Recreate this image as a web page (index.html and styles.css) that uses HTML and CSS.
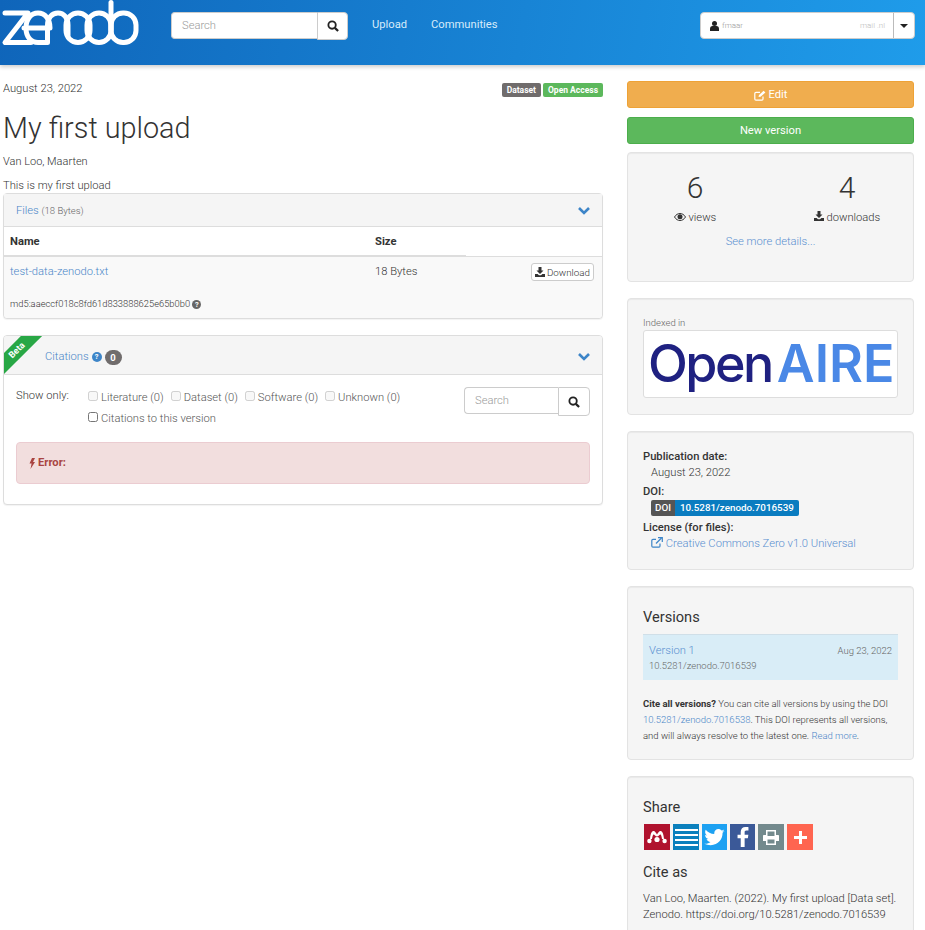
FILE: index.html
```html
<!DOCTYPE html>
<html>
    <head>
        <meta charset="utf-8">
        <title>My first upload</title>
        <link rel="stylesheet" href="styles.css">
    </head>
    <body>
        <header class="navbar">
            <svg class="logo" width="140" height="46" viewBox="0 0 140 46" fill="none" stroke="#fff" stroke-width="5" stroke-linecap="round" stroke-linejoin="round">
                <polyline points="5,13 28,13 5,42.5 31,42.5"/>
                <path d="M24 28 H50 C50 19 45 13 38 13 C31 13 26 19 26 28 C26 37 31 42.5 38 42.5 H46"/>
                <path d="M47.5 42.5 V25 C47.5 18 52 13 58 13 C64 13 68 18 68 25 V35"/>
                <rect x="66" y="13" width="24" height="29.5" rx="12"/>
                <rect x="87" y="13" width="24" height="29.5" rx="12"/>
                <line x1="111" y1="2.5" x2="111" y2="30"/>
                <rect x="111" y="13" width="25" height="29.5" rx="12"/>
            </svg>
            <div class="search-group nav-search">
                <input class="search-input" type="text" placeholder="Search">
                <button class="search-btn">
                    <svg width="12" height="12" viewBox="0 0 13 13" fill="none" stroke="#222" stroke-width="2"><circle cx="5.5" cy="5.5" r="4"/><line x1="8.5" y1="8.5" x2="12" y2="12" stroke-width="2.4"/></svg>
                </button>
            </div>
            <a class="nav-link" href="#">Upload</a>
            <a class="nav-link" href="#">Communities</a>
            <div class="user-menu">
                <div class="user-name">
                    <svg width="9" height="10" viewBox="0 0 9 10" fill="#222"><circle cx="4.5" cy="2.6" r="2.5"/><path d="M0 10 V7.5 C0 5.8 1.5 5 2.5 5 H6.5 C7.5 5 9 5.8 9 7.5 V10 Z"/></svg>
                    <span class="user-blur">fmaar</span>
                    <span class="user-blur user-blur-end">mail .nl</span>
                </div>
                <div class="user-caret"></div>
            </div>
        </header>

        <div class="page">
            <main class="left-col">
                <div class="meta-row">
                    <span class="pub-date">August 23, 2022</span>
                    <span class="labels">
                        <span class="label label-grey">Dataset</span>
                        <span class="label label-green">Open Access</span>
                    </span>
                </div>
                <h1 class="title">My first upload</h1>
                <p class="authors">Van Loo, Maarten</p>
                <p class="description">This is my first upload</p>

                <section class="panel">
                    <div class="panel-head files-head">
                        <span><a href="#">Files</a> <small>(18 Bytes)</small></span>
                        <svg class="chevron" width="12" height="8" viewBox="0 0 12 8" fill="none" stroke="#3d85c8" stroke-width="2.6"><polyline points="1,1 6,6 11,1"/></svg>
                    </div>
                    <div class="files-cols">
                        <b class="col-name">Name</b>
                        <b class="col-size">Size</b>
                    </div>
                    <div class="files-row">
                        <div class="file-row-top">
                            <a class="col-name" href="#">test-data-zenodo.txt</a>
                            <span class="col-size">18 Bytes</span>
                            <button class="download-btn">
                                <svg width="10" height="10" viewBox="0 0 10 10" fill="#333"><path d="M3.5 0 H6.5 V3.5 H8.5 L5 7 L1.5 3.5 H3.5 Z"/><path d="M0 7 H2.6 L4 8.3 H6 L7.4 7 H10 V10 H0 Z"/></svg>
                                Download
                            </button>
                        </div>
                        <div class="md5">md5:aaeccf018c8fd61d833888625e65b0b0
                            <span class="help help-grey">?</span>
                        </div>
                    </div>
                </section>

                <section class="panel citations-panel">
                    <div class="ribbon">Beta</div>
                    <div class="panel-head citations-head">
                        <span class="citations-title">
                            <a href="#">Citations</a>
                            <span class="help help-blue">?</span>
                            <span class="badge">0</span>
                        </span>
                        <svg class="chevron" width="12" height="8" viewBox="0 0 12 8" fill="none" stroke="#3d85c8" stroke-width="2.6"><polyline points="1,1 6,6 11,1"/></svg>
                    </div>
                    <div class="citations-body">
                        <div class="filters">
                            <span class="show-only">Show only:</span>
                            <div class="filter-lines">
                                <div class="filter-line">
                                    <label><input type="checkbox" disabled> Literature (0)</label>
                                    <label><input type="checkbox" disabled> Dataset (0)</label>
                                    <label><input type="checkbox" disabled> Software (0)</label>
                                    <label><input type="checkbox" disabled> Unknown (0)</label>
                                </div>
                                <div class="filter-line">
                                    <label><input type="checkbox"> Citations to this version</label>
                                </div>
                            </div>
                            <div class="search-group cite-search">
                                <input class="search-input" type="text" placeholder="Search">
                                <button class="search-btn">
                                    <svg width="12" height="12" viewBox="0 0 13 13" fill="none" stroke="#222" stroke-width="2"><circle cx="5.5" cy="5.5" r="4"/><line x1="8.5" y1="8.5" x2="12" y2="12" stroke-width="2.4"/></svg>
                                </button>
                            </div>
                        </div>
                        <div class="alert-error">
                            <svg width="6" height="11" viewBox="0 0 6 11" fill="#a94442"><path d="M3 0 H6 L4 4 H6 L1.5 11 L2.6 5.5 H0.5 Z"/></svg>
                            <b>Error:</b>
                        </div>
                    </div>
                </section>
            </main>

            <aside class="right-col">
                <a class="btn btn-edit" href="#">
                    <svg width="12" height="11" viewBox="0 0 12 11" fill="none" stroke="#fff" stroke-width="1.2"><path d="M9 6.5 V9 C9 9.7 8.6 10.2 8 10.2 H2 C1.3 10.2 0.8 9.7 0.8 9 V3.5 C0.8 2.8 1.3 2.3 2 2.3 H6"/><path d="M4.5 7 L5 5 L9.6 0.8 L11.4 2.4 L6.5 6.8 Z" fill="#fff" stroke="none"/></svg>
                    Edit
                </a>
                <a class="btn btn-version" href="#">New version</a>

                <div class="well stats-well">
                    <div class="stats">
                        <div class="stat">
                            <div class="stat-num">6</div>
                            <div class="stat-label">
                                <svg width="12" height="8" viewBox="0 0 12 8"><path d="M0.5 4 C2 1.5 4 0.5 6 0.5 C8 0.5 10 1.5 11.5 4 C10 6.5 8 7.5 6 7.5 C4 7.5 2 6.5 0.5 4 Z" fill="none" stroke="#333" stroke-width="1"/><circle cx="6" cy="3.8" r="2.5" fill="#333"/></svg>
                                views
                            </div>
                        </div>
                        <div class="stat">
                            <div class="stat-num">4</div>
                            <div class="stat-label">
                                <svg width="10" height="10" viewBox="0 0 10 10" fill="#333"><path d="M3.5 0 H6.5 V3.5 H8.5 L5 7 L1.5 3.5 H3.5 Z"/><path d="M0 7 H2.6 L4 8.3 H6 L7.4 7 H10 V10 H0 Z"/></svg>
                                downloads
                            </div>
                        </div>
                    </div>
                    <a class="more-details" href="#">See more details...</a>
                </div>

                <div class="well index-well">
                    <div class="indexed">Indexed in</div>
                    <div class="openaire"><span class="oa-open">Open</span><span class="oa-aire">AIRE</span></div>
                </div>

                <div class="well info-well">
                    <dl class="info">
                        <dt>Publication date:</dt>
                        <dd>August 23, 2022</dd>
                        <dt>DOI:</dt>
                        <dd class="doi-value"><span class="doi-badge"><span class="doi-left">DOI</span><span class="doi-right">10.5281/zenodo.7016539</span></span></dd>
                        <dt>License (for files):</dt>
                        <dd>
                            <a href="#">
                                <svg width="12" height="11" viewBox="0 0 12 11" fill="none" stroke="#3d85c8" stroke-width="1.2"><path d="M9 6.5 V9 C9 9.7 8.6 10.2 8 10.2 H2 C1.3 10.2 0.8 9.7 0.8 9 V3.5 C0.8 2.8 1.3 2.3 2 2.3 H5"/><path d="M5 6.5 L10.5 1"/><path d="M7 0.7 H11.3 V5"/></svg>
                                Creative Commons Zero v1.0 Universal
                            </a>
                        </dd>
                    </dl>
                </div>

                <div class="well versions-well">
                    <h4 class="well-title">Versions</h4>
                    <div class="version-row">
                        <div class="version-top">
                            <a class="version-name" href="#">Version 1</a>
                            <span class="version-date">Aug 23, 2022</span>
                        </div>
                        <div class="version-doi">10.5281/zenodo.7016539</div>
                    </div>
                    <p class="cite-all"><b>Cite all versions?</b> You can cite all versions by using the DOI <a href="#">10.5281/zenodo.7016538</a>. This DOI represents all versions, and will always resolve to the latest one. <a href="#">Read more</a>.</p>
                </div>

                <div class="well share-well">
                    <h4 class="well-title">Share</h4>
                    <div class="share-icons">
                        <span class="share share-mendeley">
                            <svg width="20" height="14" viewBox="0 0 20 14" fill="#fff"><circle cx="2.4" cy="11" r="2.2"/><circle cx="17.6" cy="11" r="2.2"/><circle cx="10" cy="9.5" r="2.6"/><path d="M3 9 C3.5 3 5 1 6.5 1 C8 1 9 3 10 4.5 C11 3 12 1 13.5 1 C15 1 16.5 3 17 9 L15 9 C14.5 6 14 4.5 13.5 4.5 C12.5 4.5 11.5 6.5 10 6.5 C8.5 6.5 7.5 4.5 6.5 4.5 C6 4.5 5.5 6 5 9 Z"/></svg>
                        </span>
                        <span class="share share-lines">
                            <svg width="23" height="17" viewBox="0 0 23 17" fill="#fff"><rect width="23" height="2"/><rect y="5" width="23" height="2"/><rect y="10" width="23" height="2"/><rect y="15" width="23" height="2"/></svg>
                        </span>
                        <span class="share share-twitter">
                            <svg width="21" height="17" viewBox="0 0 24 20" fill="#fff"><path d="M24 2.4c-.9.4-1.8.7-2.8.8 1-.6 1.8-1.6 2.2-2.7-1 .6-2 1-3.1 1.2C19.3 .7 18 0 16.6 0c-2.7 0-4.9 2.2-4.9 4.9 0 .4 0 .8.1 1.1C7.7 5.8 4.1 3.9 1.7 .9c-.4.7-.7 1.6-.7 2.5 0 1.7.9 3.2 2.2 4.1-.8 0-1.6-.2-2.2-.6v.1c0 2.4 1.7 4.4 3.9 4.8-.4.1-.8.2-1.3.2-.3 0-.6 0-.9-.1.6 2 2.4 3.4 4.6 3.4-1.7 1.3-3.8 2.1-6.1 2.1-.4 0-.8 0-1.2-.1C2.2 18.3 4.8 19 7.5 19c9.1 0 14-7.5 14-14v-.6c1-.7 1.8-1.6 2.5-2z"/></svg>
                        </span>
                        <span class="share share-facebook">
                            <svg width="12" height="20" viewBox="0 0 13 22" fill="#fff"><path d="M4 22 V12.5 H0.5 V8.5 H4 V5.5 C4 2 6 0 9.3 0 C10.8 0 12 .1 12.5 .2 V3.8 H10.3 C8.6 3.8 8.3 4.6 8.3 5.8 V8.5 H12.4 L11.8 12.5 H8.3 V22 Z"/></svg>
                        </span>
                        <span class="share share-print">
                            <svg width="16" height="15" viewBox="0 0 16 15" fill="#fff"><path fill-rule="evenodd" d="M3 0 H13 V5 H15 C15.6 5 16 5.4 16 6 V11 H13 V15 H3 V11 H0 V6 C0 5.4 .4 5 1 5 H3 Z M4.5 1.5 V6 H11.5 V1.5 Z M4.5 9.5 V13.5 H11.5 V9.5 Z"/></svg>
                        </span>
                        <span class="share share-plus">
                            <svg width="13" height="13" viewBox="0 0 13 13" fill="#fff"><rect x="5" width="3" height="13"/><rect y="5" width="13" height="3"/></svg>
                        </span>
                    </div>
                    <h4 class="well-title cite-title">Cite as</h4>
                    <p class="citation">Van Loo, Maarten. (2022). My first upload [Data set]. Zenodo. https://doi.org/10.5281/zenodo.7016539</p>
                    <div class="style-select"></div>
                </div>
            </aside>
        </div>
    </body>
</html>
```

FILE: styles.css
```css
* {
    box-sizing: border-box;
}

html, body {
    margin: 0;
    padding: 0;
}

body {
    height: 930px;
    overflow: hidden;
    font-family: Roboto, sans-serif;
    font-size: 11.2px;
    font-weight: 300;
    line-height: 16px;
    color: #333;
    background-color: #fff;
}

a {
    color: #337ab7;
    text-decoration: none;
}

b {
    font-weight: 700;
}

/* top bar */
.navbar {
    display: flex;
    align-items: flex-start;
    height: 65px;
    background: linear-gradient(100deg, #0f65ba 0%, #1f9cea 100%);
    box-shadow: 0 2px 4px rgba(0, 0, 0, 0.2);
}

.logo {
    flex: none;
    margin-right: 31px;
}

.search-group {
    display: flex;
}

.search-input {
    font-family: Roboto, sans-serif;
    font-size: 11.2px;
    font-weight: 300;
    padding: 0 10px;
    border: 1px solid #ccc;
    border-right: none;
    border-radius: 4px 0 0 4px;
    background-color: #fff;
    outline: none;
    min-width: 0;
}

.search-input::placeholder {
    color: #999;
}

.search-btn {
    display: flex;
    align-items: center;
    justify-content: center;
    padding: 0;
    background-color: #fff;
    border: 1px solid #ccc;
    border-radius: 0 4px 4px 0;
}

.nav-search {
    margin-top: 12px;
}

.nav-search .search-input {
    width: 146px;
    height: 27px;
}

.nav-search .search-btn {
    width: 31px;
    height: 28px;
}

.nav-link {
    margin-top: 17px;
    margin-left: 24px;
    color: #d6ebfa;
    font-weight: 400;
}

.user-menu {
    display: flex;
    margin-top: 12px;
    margin-left: auto;
    margin-right: 10px;
    width: 215px;
    height: 27px;
    background-color: #fff;
    border: 1px solid #ccc;
    border-radius: 4px;
}

.user-name {
    flex: 1;
    display: flex;
    align-items: center;
    gap: 3px;
    padding-left: 9px;
    padding-right: 8px;
    border-right: 1px solid #bbb;
}

.user-blur {
    font-size: 8px;
    color: #999;
}

.user-blur-end {
    margin-left: auto;
    color: #bbb;
}

.user-caret {
    position: relative;
    width: 20px;
}

.user-caret::after {
    content: "";
    position: absolute;
    left: 6px;
    top: 11px;
    border-top: 4px solid #222;
    border-left: 4px solid transparent;
    border-right: 4px solid transparent;
}

/* page columns */
.page {
    display: flex;
    padding-left: 3px;
}

.left-col {
    flex: none;
    width: 600px;
    padding-top: 16px;
}

.right-col {
    flex: none;
    width: 287px;
    margin-left: 24px;
    padding-top: 16px;
}

.meta-row {
    display: flex;
    justify-content: space-between;
    height: 17px;
}

.labels {
    display: flex;
    gap: 2px;
    margin-top: 2px;
}

.label {
    height: 14px;
    padding: 0 5px;
    border-radius: 2px;
    color: #fff;
    font-size: 8.5px;
    font-weight: 700;
    line-height: 14px;
}

.label-grey {
    background-color: #706c6c;
}

.label-green {
    background-color: #5cb85c;
}

.title {
    margin: 13px 0 0;
    font-size: 28.8px;
    font-weight: 300;
    line-height: 34px;
}

.authors {
    margin: 9px 0 0;
    font-size: 11px;
}

.description {
    height: 15px;
    margin: 8px 0 0;
}

/* panels */
.panel {
    border: 1px solid #ddd;
    border-radius: 4px;
    box-shadow: 0 1px 1px rgba(0, 0, 0, 0.05);
    background-color: #fff;
}

.panel-head {
    display: flex;
    justify-content: space-between;
    align-items: center;
    background-color: #f5f5f5;
    border-bottom: 1px solid #ddd;
}

.panel-head a {
    color: #4a86c8;
}

.panel-head small {
    font-size: 9.5px;
    color: #666;
}

.chevron {
    flex: none;
    margin-right: 12px;
}

.files-head {
    height: 33px;
    padding-top: 2px;
    padding-left: 12px;
}

.files-cols {
    position: relative;
    display: flex;
    align-items: center;
    height: 30px;
    border-bottom: 1px solid #ddd;
}

.files-cols::after {
    content: "";
    position: absolute;
    left: 0;
    bottom: -1px;
    width: 462px;
    height: 2px;
    background-color: #ddd;
}

.files-cols b {
    color: #333;
}

.col-name {
    display: block;
    flex: none;
    width: 371px;
    padding-left: 6px;
}

.col-size {
    flex: none;
}

.files-row {
    height: 61px;
    background-color: #f9f9f9;
    border-radius: 0 0 4px 4px;
}

.file-row-top {
    display: flex;
    align-items: center;
    height: 30px;
    padding-right: 8px;
}

.file-row-top .col-name {
    color: #4a86c8;
}

.download-btn {
    display: flex;
    align-items: center;
    gap: 2px;
    height: 18px;
    margin-left: auto;
    padding: 0 3px;
    font-family: Roboto, sans-serif;
    font-size: 9.8px;
    font-weight: 300;
    color: #333;
    background-color: #fff;
    border: 1px solid #ccc;
    border-radius: 3px;
}

.md5 {
    margin-top: 9px;
    padding-left: 6px;
    font-size: 9.35px;
    font-weight: 300;
    color: #333;
}

.help {
    display: inline-block;
    width: 9px;
    height: 9px;
    border-radius: 50%;
    color: #fff;
    font-size: 7.5px;
    font-weight: 700;
    line-height: 9px;
    text-align: center;
}

.help-grey {
    background-color: #666;
}

.help-blue {
    width: 10px;
    height: 10px;
    line-height: 10px;
    background-color: #3d85c8;
}

.citations-panel {
    position: relative;
    overflow: hidden;
    margin-top: 16px;
    height: 170px;
}

.ribbon {
    position: absolute;
    left: -29px;
    top: 7px;
    width: 84px;
    height: 15px;
    background-color: #28a745;
    transform: rotate(-45deg);
    text-align: center;
    color: #fff;
    font-size: 9px;
    font-weight: 700;
    line-height: 15px;
}

.citations-head {
    height: 39px;
    padding-top: 4px;
    padding-left: 41px;
}

.citations-title {
    display: flex;
    align-items: center;
    gap: 3px;
}

.badge {
    width: 17px;
    height: 15px;
    border-radius: 8px;
    background-color: #706c6c;
    color: #fff;
    font-size: 9.5px;
    font-weight: 700;
    line-height: 15px;
    text-align: center;
}

.citations-body {
    padding: 12px 12px 0;
}

.filters {
    display: flex;
    align-items: flex-start;
}

.show-only {
    flex: none;
    width: 72px;
    margin-top: 1px;
}

.filter-lines {
    flex: 1;
    padding-top: 3px;
}

.filter-line {
    display: flex;
    gap: 7px;
    height: 21px;
    color: #555;
}

.filter-line label {
    display: flex;
    align-items: flex-start;
    gap: 3px;
}

.filter-line input {
    width: 10px;
    height: 10px;
    margin: 1px 0 0;
}

.cite-search .search-input {
    width: 94px;
    height: 27px;
}

.cite-search .search-btn {
    width: 32px;
    height: 29px;
}

.alert-error {
    display: flex;
    align-items: center;
    gap: 3px;
    height: 42px;
    margin-top: 10px;
    padding-left: 12px;
    color: #a94442;
    background-color: #f2dede;
    border: 1px solid #ebccd1;
    border-radius: 4px;
}

/* right column */
.btn {
    display: flex;
    align-items: center;
    justify-content: center;
    gap: 3px;
    color: #fff;
    font-weight: 400;
    border-radius: 3px;
}

.btn-edit {
    height: 27px;
    padding-top: 1px;
    background-color: #f0ad4e;
    border: 1px solid #eea236;
}

.btn-version {
    height: 27px;
    margin-top: 9px;
    background-color: #5cb85c;
    border: 1px solid #4cae4c;
}

.well {
    margin-top: 8px;
    padding: 16px 15px;
    background-color: #f5f5f5;
    border: 1px solid #e3e3e3;
    border-radius: 4px;
    box-shadow: inset 0 1px 1px rgba(0, 0, 0, 0.05);
}

.stats-well {
    height: 130px;
    padding-top: 17px;
    text-align: center;
}

.stats {
    display: flex;
    margin: 0 -25px 0 -24px;
}

.stat {
    flex: 1;
}

.stat-num {
    font-size: 30px;
    font-weight: 300;
    line-height: 36px;
}

.stat-label {
    margin-top: 4px;
}

.more-details {
    display: block;
    margin-top: 8px;
    color: #5a8fd0;
}

.index-well {
    height: 117px;
    margin-top: 16px;
    padding-top: 17px;
}

.indexed {
    font-size: 9.5px;
    line-height: 14px;
    color: #666;
}

.openaire {
    display: flex;
    align-items: center;
    height: 68px;
    padding-left: 4px;
    font-family: Inter, sans-serif;
    font-size: 52px;
    line-height: 64px;
    white-space: nowrap;
    background-color: #fff;
    border: 1px solid #ddd;
    border-radius: 3px;
}

.oa-open {
    color: #1f2181;
    font-weight: 500;
    letter-spacing: -2.5px;
    margin-right: 5px;
}

.oa-aire {
    color: #4a88e6;
    font-weight: 600;
}

.info-well {
    height: 139px;
    margin-top: 16px;
    padding-top: 17px;
}

.info {
    margin: 0;
}

.info dt {
    font-weight: 500;
    line-height: 16px;
}

.info dd {
    margin: 0 0 3px 8px;
    line-height: 16px;
}

.info .doi-value {
    margin-bottom: 4px;
}

.info a {
    color: #5a8fd0;
}

.info svg {
    vertical-align: -1px;
}

.doi-badge {
    display: inline-flex;
    height: 16px;
    font-size: 9.8px;
    font-weight: 500;
    line-height: 16px;
    color: #fff;
    border-radius: 2px;
    overflow: hidden;
}

.doi-left {
    padding: 0 4px;
    background-color: #555;
}

.doi-right {
    padding: 0 5px;
    background-color: #0a7cc0;
}

.versions-well {
    height: 174px;
    margin-top: 16px;
    padding-top: 20px;
}

.well-title {
    margin: 0;
    font-size: 14.6px;
    font-weight: 400;
    line-height: 20px;
}

.version-row {
    height: 46px;
    margin-top: 7px;
    padding: 8px 6px 0;
    background-color: #d9edf7;
    border-top: 1px solid #d0dfe8;
}

.version-top {
    display: flex;
    justify-content: space-between;
    align-items: center;
}

.version-name {
    color: #5a8fd0;
    font-size: 11.2px;
}

.version-date {
    font-size: 9.5px;
    color: #666;
}

.version-doi {
    margin-top: -1px;
    font-size: 9.5px;
    line-height: 16px;
    color: #666;
}

.cite-all {
    margin: 16px 0 0;
    font-size: 9.5px;
    line-height: 16px;
}

.cite-all a {
    color: #4a86c8;
}

.cite-all b {
    color: #333;
}

.share-well {
    height: 180px;
    margin-top: 16px;
    padding-top: 20px;
}

.share-icons {
    display: flex;
    gap: 3px;
    margin-top: 7px;
    margin-left: 1px;
}

.share {
    display: flex;
    align-items: center;
    justify-content: center;
    width: 25px;
    height: 26px;
}

.share-mendeley {
    width: 26px;
    background-color: #b0122e;
}

.share-lines {
    width: 26px;
    background-color: #0b80bd;
}

.share-twitter {
    background-color: #1da1f2;
}

.share-facebook {
    background-color: #3b5998;
}

.share-print {
    width: 26px;
    background-color: #738a8d;
}

.share-plus {
    width: 26px;
    background-color: #ff6550;
}

.cite-title {
    margin-top: 12px;
}

.citation {
    margin: 9px 0 0;
}

.style-select {
    height: 20px;
    margin-top: 8px;
    background-color: #fff;
    border: 1px solid #999;
    border-radius: 3px;
}
```
